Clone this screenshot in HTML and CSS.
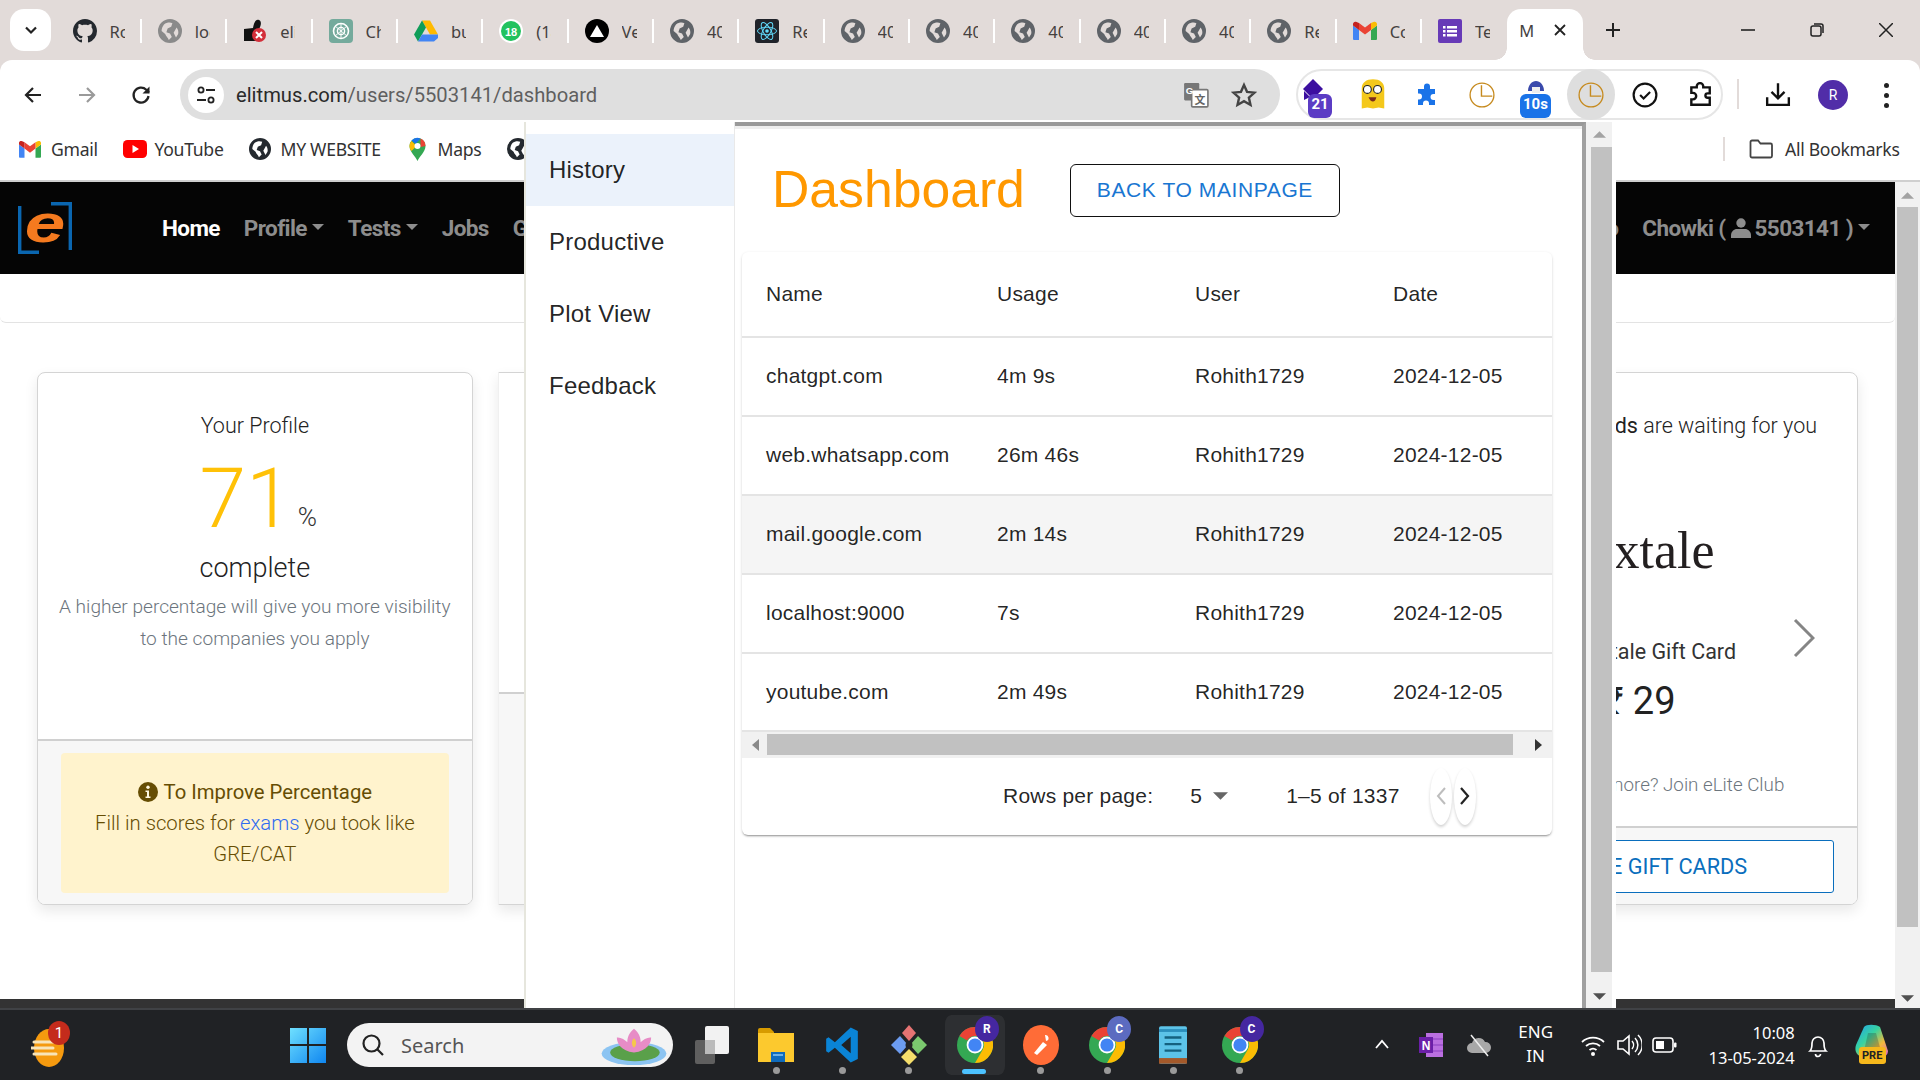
FILE: index.html
```html
<!DOCTYPE html>
<html lang="en">
<head>
<meta charset="utf-8">
<title>Dashboard</title>
<link rel="stylesheet" href="styles.css">
</head>
<body>
<svg class="defs" width="0" height="0">
  <defs>
    <symbol id="globe" viewBox="2 2 20 20"><path fill-rule="evenodd" d="M12 2a10 10 0 1 0 0 20 10 10 0 0 0 0-20zM7 6.500c2-1.500 5-2 7-1l-1 3-3 1.500-1 3 3 1 1.500 3-2.500 2.500c-.5-2-2.500-3-3-5L5 12c0-2 .800-4 2-5.500zM17.500 9c1.200 1.500 1.800 3.500 1.300 5.500L17 17.500l-2-4z"/></symbol>
    <symbol id="github" viewBox="0 0 16 16"><path d="M8 0C3.58 0 0 3.58 0 8c0 3.54 2.29 6.53 5.47 7.59.4.07.55-.17.55-.38 0-.19-.01-.82-.01-1.49-2.01.37-2.53-.49-2.69-.94-.09-.23-.48-.94-.82-1.13-.28-.15-.68-.52-.01-.53.63-.01 1.08.58 1.23.82.72 1.21 1.87.87 2.33.66.07-.52.28-.87.51-1.07-1.78-.2-3.64-.89-3.64-3.95 0-.87.31-1.59.82-2.15-.08-.2-.36-1.02.08-2.12 0 0 .67-.21 2.2.82.64-.18 1.32-.27 2-.27.68 0 1.36.09 2 .27 1.53-1.04 2.2-.82 2.2-.82.44 1.1.16 1.92.08 2.12.51.56.82 1.27.82 2.15 0 3.07-1.87 3.75-3.65 3.95.29.25.54.73.54 1.48 0 1.07-.01 1.93-.01 2.2 0 .21.15.46.55.38A8.013 8.013 0 0016 8c0-4.42-3.58-8-8-8z"/></symbol>
    <symbol id="gmail" viewBox="0 0 24 18"><path fill="#4285f4" d="M1 18h5V8L0 3.5V17a1 1 0 0 0 1 1z"/><path fill="#34a853" d="M18 18h5a1 1 0 0 0 1-1V3.5L18 8z"/><path fill="#fbbc04" d="M18 1v7l6-4.5V2c0-2-2.2-3-3.6-1.9z"/><path fill="#ea4335" d="M6 8V1l6 4.5L18 1v7l-6 4.5z"/><path fill="#c5221f" d="M0 2v1.5L6 8V1L3.6.1C2.2-1 0 0 0 2z"/></symbol>
    <symbol id="drive" viewBox="0 0 24 21"><path fill="#ffba00" d="M16 0l8 14h-8L8 0z"/><path fill="#0f9d58" d="M8 0l4 7-8 14-4-7z"/><path fill="#4285f4" d="M4 21l4-7h20l-8 7z"/></symbol>
    <symbol id="chrome" viewBox="0 0 24 24"><circle cx="12" cy="12" r="12" fill="#34a853"/><path fill="#ea4335" d="M12 0a12 12 0 0 1 10.4 6H12a6 6 0 0 0-5.2 3L1.6 6A12 12 0 0 1 12 0z"/><path fill="#fbbc04" d="M22.4 6A12 12 0 0 1 12 24l5.2-9a6 6 0 0 0 0-6z"/><circle cx="12" cy="12" r="5.6" fill="#fff"/><circle cx="12" cy="12" r="4.4" fill="#4285f4"/></symbol>
    <symbol id="clock" viewBox="0 0 24 24"><circle cx="12" cy="12" r="11" fill="none" stroke="#c68a1e" stroke-width="1.2"/><path d="M11.500 3v10h10" fill="none" stroke="#c68a1e" stroke-width="1.300"/></symbol>
    <symbol id="caret" viewBox="0 0 10 5"><path d="M0 0h10L5 5z"/></symbol>
  </defs>
</svg>

<header class="chrome">
  <div class="tabstrip">
    <div class="tabs-btn"><svg class="i14" viewBox="0 0 14 14"><path d="M2 4.5l5 5 5-5" fill="none" stroke="#222" stroke-width="2.2"/></svg></div>
    <div class="tab"><svg class="ti dark"><use href="#github"/></svg><span class="tt">Rohith</span></div>
    <div class="tab"><svg class="ti lightglobe"><use href="#globe"/></svg><span class="tt">localhost</span></div>
    <div class="tab"><svg class="ti" viewBox="0 0 24 24"><path d="M1 10l9-1c1-6 3-9 6-8 3 1 2 6 0 9v12H1z" fill="#111"/><circle cx="16" cy="16" r="7" fill="#d32f3a"/><path d="M13 13l6 6m0-6l-6 6" stroke="#fff" stroke-width="2"/></svg><span class="tt">eliTMUS</span></div>
    <div class="tab"><svg class="ti" viewBox="0 0 24 24"><rect width="24" height="24" rx="4" fill="#74aa9c"/><circle cx="12" cy="12" r="7.5" fill="none" stroke="#fff" stroke-width="1.6"/><circle cx="12" cy="12" r="3.6" fill="none" stroke="#fff" stroke-width="1.4"/><path d="M6 7l12 10M18 7L6 17M12 4v16" stroke="#fff" stroke-width=".9"/></svg><span class="tt">ChatGPT</span></div>
    <div class="tab"><svg class="ti"><use href="#drive"/></svg><span class="tt">build</span></div>
    <div class="tab"><svg class="ti" viewBox="0 0 24 24"><circle cx="12" cy="12" r="12" fill="#fff"/><circle cx="12" cy="12" r="10" fill="#22c25e"/><text x="12" y="16.5" class="wa">18</text></svg><span class="tt">(18) WhatsApp</span></div>
    <div class="tab"><svg class="ti" viewBox="0 0 24 24"><circle cx="12" cy="12" r="12" fill="#000"/><path d="M12 6l7 12H5z" fill="#fff"/></svg><span class="tt">Vercel</span></div>
    <div class="tab"><svg class="ti gglobe"><use href="#globe"/></svg><span class="tt">404</span></div>
    <div class="tab"><svg class="ti" viewBox="0 0 24 24"><rect width="24" height="24" rx="3" fill="#20232a"/><g fill="none" stroke="#61dafb" stroke-width="1"><ellipse cx="12" cy="12" rx="9.5" ry="3.8"/><ellipse cx="12" cy="12" rx="9.5" ry="3.8" transform="rotate(60 12 12)"/><ellipse cx="12" cy="12" rx="9.5" ry="3.8" transform="rotate(120 12 12)"/></g><circle cx="12" cy="12" r="1.8" fill="#61dafb"/></svg><span class="tt">React</span></div>
    <div class="tab"><svg class="ti gglobe"><use href="#globe"/></svg><span class="tt">404</span></div>
    <div class="tab"><svg class="ti gglobe"><use href="#globe"/></svg><span class="tt">404</span></div>
    <div class="tab"><svg class="ti gglobe"><use href="#globe"/></svg><span class="tt">404</span></div>
    <div class="tab"><svg class="ti gglobe"><use href="#globe"/></svg><span class="tt">404</span></div>
    <div class="tab"><svg class="ti gglobe"><use href="#globe"/></svg><span class="tt">404</span></div>
    <div class="tab"><svg class="ti gglobe"><use href="#globe"/></svg><span class="tt">React</span></div>
    <div class="tab"><svg class="ti tgm"><use href="#gmail"/></svg><span class="tt">Compose</span></div>
    <div class="tab noline"><svg class="ti" viewBox="0 0 24 24"><rect width="24" height="24" rx="2" fill="#673ab7"/><path d="M5 7h2.5v2.5H5zM9 7h10v2.5H9zM5 11h2.5v2.5H5zM9 11h10v2.5H9zM5 15h2.5v2.5H5zM9 15h10v2.5H9z" fill="#fff"/></svg><span class="tt">Test</span></div>
    <div class="tab-active"><span class="tt tt-a">MUI</span><svg class="i14 x" viewBox="0 0 14 14"><path d="M2 2l10 10M12 2L2 12" stroke="#222" stroke-width="1.8"/></svg></div>
    <div class="newtab"><svg class="i18" viewBox="0 0 18 18"><path d="M9 2v14M2 9h14" stroke="#222" stroke-width="2"/></svg></div>
    <div class="winctl">
      <svg class="i14" viewBox="0 0 14 14"><path d="M0 7h14" stroke="#222" stroke-width="1.6"/></svg>
      <svg class="i14" viewBox="0 0 14 14"><rect x="1" y="3" width="10" height="10" rx="2" fill="none" stroke="#222" stroke-width="1.5"/><path d="M4 1h7a2 2 0 0 1 2 2v7" fill="none" stroke="#222" stroke-width="1.5"/></svg>
      <svg class="i14" viewBox="0 0 14 14"><path d="M0 0l14 14M14 0L0 14" stroke="#222" stroke-width="1.5"/></svg>
    </div>
  </div>

  <div class="toolbar">
    <div class="navbtn"><svg class="i24" viewBox="0 0 24 24"><path d="M20 12H5m7-7l-7 7 7 7" fill="none" stroke="#222" stroke-width="2.2"/></svg></div>
    <div class="navbtn"><svg class="i24" viewBox="0 0 24 24"><path d="M4 12h15m-7-7l7 7-7 7" fill="none" stroke="#9a9a9a" stroke-width="2.2"/></svg></div>
    <div class="navbtn"><svg class="i24" viewBox="0 0 24 24"><path d="M19.5 13a7.5 7.5 0 1 1-2.2-6.3L20 9.5" fill="none" stroke="#222" stroke-width="2.2"/><path d="M20.5 3.5v7h-7z" fill="#222"/></svg></div>
    <div class="omnibox">
      <div class="siteinfo"><svg class="i22" viewBox="0 0 22 22"><circle cx="6" cy="6" r="2.6" fill="none" stroke="#222" stroke-width="1.8"/><path d="M11 6h9M2 16h9" stroke="#222" stroke-width="1.8"/><circle cx="16" cy="16" r="2.6" fill="none" stroke="#222" stroke-width="1.8"/></svg></div>
      <div class="url"><span class="url-host">elitmus.com</span>/users/5503141/dashboard</div>
      <svg class="translate" viewBox="0 0 24 24"><rect x="1" y="1" width="14" height="16" rx="1" fill="#777"/><rect x="8" y="7" width="15" height="16" rx="1" fill="#fff" stroke="#777" stroke-width="1.5"/><text x="6" y="11" class="tr-g">G</text><text x="15.5" y="20" class="tr-z">文</text></svg>
      <svg class="star" viewBox="0 0 24 24"><path d="M12 2.8l2.8 6.3 6.9.7-5.2 4.6 1.5 6.8-6-3.5-6 3.5 1.5-6.8-5.2-4.6 6.9-.7z" fill="none" stroke="#444" stroke-width="2.2"/></svg>
    </div>
    <div class="extpill">
      <div class="ext"><svg class="i40" viewBox="0 0 40 40"><path d="M15 4l10 10-10 10L5 14z" fill="#3c0fa0"/><path d="M6 16l6 6-6 3z" fill="#3c0fa0"/></svg><span class="ebadge purple">21</span></div>
      <div class="ext"><svg class="i36" viewBox="0 0 32 32"><path d="M6 10c0-5 4-8 10-8s10 3 10 8v18l-5-1-5 1-5-1-5 1z" fill="#f4c81c"/><circle cx="11" cy="11" r="3.500" fill="#fff" stroke="#222"/><circle cx="20" cy="11" r="3.500" fill="#fff" stroke="#222"/><path d="M12 18c2 5 6 5 7 0z" fill="#7a2b1c"/></svg></div>
      <div class="ext"><svg class="i24" viewBox="0 0 24 24"><path d="M9 3.5a3 3 0 0 1 6 0V6h5v5h-1.5a3 3 0 0 0 0 6H20v5h-6v-1.5a3 3 0 0 0-6 0V22H3v-5.5h1a3 3 0 0 0 0-6H3V6h6z" fill="#1a73e8"/></svg></div>
      <div class="ext"><svg class="i26"><use href="#clock"/></svg></div>
      <div class="ext"><svg class="i40" viewBox="0 0 40 40"><path d="M12 16c0-6 4-10 8-10s8 4 8 10z" fill="#3949ab"/><rect x="16" y="12" width="8" height="6" fill="#eee"/></svg><span class="ebadge blue">10s</span></div>
      <div class="ext ext-on"><svg class="i26"><use href="#clock"/></svg></div>
      <div class="ext"><svg class="i26" viewBox="0 0 24 24"><circle cx="12" cy="12" r="10.5" fill="none" stroke="#111" stroke-width="2"/><path d="M7.5 12l3.2 3.2 6-6" fill="none" stroke="#111" stroke-width="2"/></svg></div>
      <div class="ext"><svg class="i26" viewBox="0 0 24 24"><path d="M9 5V4a3 3 0 0 1 6 0v1h6v5.5h-2a2 2 0 0 0 0 4h2V21H4v-5h1.5a3 3 0 0 0 0-6H4V5z" fill="none" stroke="#111" stroke-width="2.2"/></svg></div>
    </div>
    <div class="tb-sep"></div>
    <div class="tb-dl"><svg class="i26" viewBox="0 0 24 24"><path d="M12 2v14m-6-6l6 6 6-6" fill="none" stroke="#111" stroke-width="2.2"/><path d="M2 15v7h20v-7" fill="none" stroke="#111" stroke-width="2.2"/></svg></div>
    <div class="avatar">R</div>
    <div class="dots"><i></i><i></i><i></i></div>
  </div>

  <div class="bookmarks">
    <div class="bm bm-gmail"><svg class="bmi-gm"><use href="#gmail"/></svg>Gmail</div>
    <div class="bm bm-yt"><svg class="bmi-yt" viewBox="0 0 24 18"><rect width="24" height="18" rx="4.5" fill="#f00"/><path d="M9.5 5l6.5 4-6.5 4z" fill="#fff"/></svg>YouTube</div>
    <div class="bm bm-web"><svg class="bmi dark"><use href="#globe"/></svg>MY WEBSITE</div>
    <div class="bm bm-maps"><svg class="bmi-map" viewBox="0 0 18 24"><path d="M9 24c-1.5-4-8-9-8-15a8 8 0 0 1 16 0c0 6-6.500 11-8 15z" fill="#34a853"/><path d="M3 3.500A8 8 0 0 1 12 1.500L7 7z" fill="#1a73e8"/><path d="M12 1.500a8 8 0 0 1 5 7.500l-5 1z" fill="#ea4335"/><path d="M1 9c0 2 1 4 2 5l5-5-5-5C2 5 1 7 1 9z" fill="#fbbc04"/><circle cx="9" cy="9" r="3" fill="#fff"/></svg>Maps</div>
    <div class="bm bm-more"><svg class="bmi dark"><use href="#globe"/></svg></div>
    <div class="bm-sep"></div>
    <div class="bm bm-all"><svg class="bmi-f" viewBox="0 0 24 20"><path d="M1.500 3a1.500 1.500 0 0 1 1.500-1.500h6l2.500 3h10A1.500 1.500 0 0 1 23 6v11a1.500 1.500 0 0 1-1.500 1.500H3A1.500 1.500 0 0 1 1.500 17z" fill="none" stroke="#444" stroke-width="1.8"/></svg>All Bookmarks</div>
  </div>
</header>

<div class="page">
  <main class="site">
    <nav class="sitenav">
      <svg class="logo" viewBox="0 0 54 52">
        <path d="M1.700 4v46.300H21" class="lg-l"/>
        <path d="M33 1.700h19.300V48" class="lg-r"/>
        <text x="20" y="40" class="lg-e" transform="scale(1.350 1)">e</text>
      </svg>
      <a class="nl nl-on">Home</a>
      <a class="nl">Profile<svg class="nc"><use href="#caret"/></svg></a>
      <a class="nl">Tests<svg class="nc"><use href="#caret"/></svg></a>
      <a class="nl">Jobs</a>
      <a class="nl">Gift Cards</a>
      <a class="nl nl-info">Coupon Info</a>
      <a class="nl nl-user">Chowki (<svg class="user" viewBox="0 0 20 20"><circle cx="10" cy="5" r="4.700"/><path d="M0 20v-2.500C0 13.500 3 11 6 11h8c3 0 6 2.500 6 6.500V20z"/></svg> 5503141 )<svg class="nc"><use href="#caret"/></svg></a>
    </nav>
    <div class="subbar"></div>
    <section class="cards">
      <article class="card">
        <div class="card-body">
          <p class="cp-title">Your Profile</p>
          <p class="cp-num"><span class="num71">71</span><span class="pct">%</span></p>
          <p class="cp-complete">complete</p>
          <p class="cp-note">A higher percentage will give you more visibility to the companies you apply</p>
        </div>
        <div class="card-foot foot-yellow">
          <div class="alert">
            <div class="alert-h"><svg class="info" viewBox="0 0 20 20"><circle cx="10" cy="10" r="10" fill="#664d03"/><circle cx="10" cy="5.200" r="1.700" fill="#fff8e0"/><path d="M7.500 8.500h3.500v6h1.500v1.500h-5v-1.500H9V10H7.500z" fill="#fff8e0"/></svg> To Improve Percentage</div>
            <div class="alert-t">Fill in scores for <a class="exams">exams</a> you took like GRE/CAT</div>
          </div>
        </div>
      </article>
      <article class="card card-plain"><div class="card-body"></div><div class="card-foot foot-2"></div></article>
      <article class="card card-plain"><div class="card-body"></div><div class="card-foot foot-3"></div></article>
      <article class="card card-gift">
        <div class="card-body">
          <p class="g-title"><b>Gift Cards</b> are waiting for you</p>
          <p class="g-logo">Nextale</p>
          <p class="g-name">Nextale Gift Card</p>
          <p class="g-price">₹ 29</p>
          <p class="g-more">Want to win more? Join eLite Club</p>
          <svg class="g-next" viewBox="0 0 22 40"><path d="M2 2l18 18L2 38" fill="none" stroke="#858585" stroke-width="3"/></svg>
        </div>
        <div class="card-foot foot-gift"><div class="gift-btn">SEE THE GIFT CARDS</div></div>
      </article>
    </section>
    <div class="sitefoot"></div>
  </main>
  <div class="vbar vbar-page">
    <div class="va va-up"><svg class="ca up"><use href="#caret"/></svg></div>
    <div class="vthumb"></div>
    <div class="va va-down"><svg class="ca"><use href="#caret"/></svg></div>
  </div>
</div>

<aside class="popup">
  <div class="side">
    <div class="side-i side-on">History</div>
    <div class="side-i">Productive</div>
    <div class="side-i">Plot View</div>
    <div class="side-i">Feedback</div>
  </div>
  <div class="pop-main">
    <div class="pop-head">
      <h1 class="dash">Dashboard</h1>
      <div class="back">BACK TO MAINPAGE</div>
    </div>
    <div class="tcard">
      <table class="tbl">
        <thead><tr><th class="c1">Name</th><th class="c2">Usage</th><th class="c3">User</th><th class="c4">Date</th></tr></thead>
        <tbody>
          <tr><td>chatgpt.com</td><td>4m 9s</td><td>Rohith1729</td><td>2024-12-05</td></tr>
          <tr><td>web.whatsapp.com</td><td>26m 46s</td><td>Rohith1729</td><td>2024-12-05</td></tr>
          <tr class="hov"><td>mail.google.com</td><td>2m 14s</td><td>Rohith1729</td><td>2024-12-05</td></tr>
          <tr><td>localhost:9000</td><td>7s</td><td>Rohith1729</td><td>2024-12-05</td></tr>
          <tr><td>youtube.com</td><td>2m 49s</td><td>Rohith1729</td><td>2024-12-05</td></tr>
        </tbody>
      </table>
      <div class="hbar">
        <svg class="ha" viewBox="0 0 8 12"><path d="M8 0v12L1 6z" fill="#8a8a8a"/></svg>
        <div class="hthumb"></div>
        <svg class="ha ha-r" viewBox="0 0 8 12"><path d="M0 0v12l7-6z" fill="#333"/></svg>
      </div>
      <div class="pager">
        <span class="rpp">Rows per page:</span>
        <span class="rv">5</span>
        <svg class="rc"><use href="#caret"/></svg>
        <span class="range">1–5 of 1337</span>
        <span class="pg pg-prev"><svg class="pgi" viewBox="0 0 12 20"><path d="M10 2L3 10l7 8" fill="none" stroke="#bdbdbd" stroke-width="2"/></svg></span>
        <span class="pg"><svg class="pgi" viewBox="0 0 12 20"><path d="M2 2l7 8-7 8" fill="none" stroke="#222" stroke-width="2.200"/></svg></span>
      </div>
    </div>
  </div>
  <div class="vbar vbar-pop">
    <div class="va va-up2"><svg class="ca up"><use href="#caret"/></svg></div>
    <div class="vthumb"></div>
    <div class="va va-down2"><svg class="ca"><use href="#caret"/></svg></div>
  </div>
</aside>

<footer class="taskbar">
  <div class="tb-left">
    <div class="weather"><svg class="wx" viewBox="0 0 34 40"><ellipse cx="18" cy="20" rx="15" ry="19" fill="#f59a0f"/><path d="M3 14h22M0 20h22M3 26h22" stroke="#f8e4b8" stroke-width="3" stroke-linecap="round"/></svg><span class="wbadge">1</span></div>
  </div>
  <div class="winbtn"><svg class="win" viewBox="0 0 36 36"><defs><linearGradient id="wg" x1="0" y1="0" x2="1" y2="1"><stop offset="0" stop-color="#6fe0ff"/><stop offset="1" stop-color="#0f86f0"/></linearGradient></defs><path fill="url(#wg)" d="M0 1h17v16H0zM19 1h17v16H19zM0 19h17v17H0zM19 19h17v17H19z"/></svg></div>
  <div class="search">
    <svg class="i24 mag" viewBox="0 0 24 24"><circle cx="10.500" cy="10.500" r="8" fill="none" stroke="#222" stroke-width="2.200"/><path d="M16 16l6 6" stroke="#222" stroke-width="2.200"/></svg>
    <span class="s-t">Search</span>
    <svg class="lotus" viewBox="0 0 70 42"><ellipse cx="35" cy="30" rx="34" ry="12" fill="#8cc4f2"/><ellipse cx="36" cy="29" rx="26" ry="9" fill="#5aa04a"/><path d="M35 4c6 5 7 10 7 14 4-4 8-5 11-5 0 6-4 14-18 16-14-2-18-10-18-16 3 0 7 1 11 5 0-4 1-9 7-14z" fill="#e78cc6"/><path d="M35 14c3 3 3 7 0 10-3-3-3-7 0-10z" fill="#f5c84a"/></svg>
  </div>
  <div class="apps">
    <div class="app"><svg class="tv" viewBox="0 0 36 40"><rect x="1" y="15" width="20" height="24" rx="2" fill="#5f5f5f"/><rect x="11" y="1" width="24" height="28" rx="2" fill="#f2f2f2"/><rect x="11" y="15" width="10" height="14" fill="#bbb"/></svg></div>
    <div class="app app-dot"><svg class="fo" viewBox="0 0 36 38"><path d="M0 4a2 2 0 0 1 2-2h10l4 4v6H0z" fill="#d79b00"/><path d="M0 7h36v29H0z" fill="#fcc92e"/><path d="M13 26h14v10H13z" fill="#0f6cbd"/><path d="M15 29h10" stroke="#8cc8f5" stroke-width="1.500"/></svg></div>
    <div class="app app-dot"><svg class="vs" viewBox="0 0 24 24"><path fill-rule="evenodd" fill="#0a84d6" d="M17.500 1L22 3.200v17.600L17.500 23 7.500 13.800l-4 3.100L2 16V8l1.500-.9 4 3.100zM17.500 6.800L11.500 12l6 5.200z"/></svg></div>
    <div class="app app-dot"><svg class="gk" viewBox="0 0 36 40"><path d="M18 0l7 8-7 8-7-8z" fill="#e57373"/><path d="M9 11l8 9-8 9-9-9z" fill="#6c9cf0"/><path d="M27 11l9 9-9 9-8-9z" fill="#7bc96f"/><path d="M18 24l8 8-8 8-8-8z" fill="#f5de6b"/><circle cx="18" cy="20" r="3.500" fill="#222"/></svg></div>
    <div class="app app-active"><svg class="ch"><use href="#chrome"/></svg><span class="cb cb-r">R</span></div>
    <div class="app app-dot"><svg class="pm" viewBox="0 0 36 40"><ellipse cx="18" cy="20" rx="18" ry="20" fill="#ff6c37"/><path d="M11 28l9-11 4 3-10 10zM22 10a3 3 0 1 1 1 6z" fill="#fff"/></svg></div>
    <div class="app app-dot"><svg class="ch"><use href="#chrome"/></svg><span class="cb cb-c">C</span></div>
    <div class="app app-dot"><svg class="np" viewBox="0 0 30 40"><rect width="30" height="40" rx="2" fill="#5cc3e8"/><rect y="34" width="30" height="6" fill="#a4592a"/><rect y="3" width="30" height="3" fill="#2b8fbc"/><path d="M6 12h18M6 19h18M6 26h18" stroke="#14617f" stroke-width="2.500"/></svg></div>
    <div class="app app-dot"><svg class="ch"><use href="#chrome"/></svg><span class="cb cb-d">C</span></div>
  </div>
  <div class="tray">
    <div class="t t-chev"><svg class="i18" viewBox="0 0 18 18"><path d="M3 12l6-7 6 7" fill="none" stroke="#fff" stroke-width="1.800"/></svg></div>
    <div class="t t-one"><svg class="i26" viewBox="0 0 26 26"><rect x="8" y="1" width="17" height="24" fill="#ba6fe0"/><path d="M14 7h11M14 13h11M14 19h11" stroke="#8a3fc0"/><rect x="1" y="5" width="14" height="16" fill="#6b1fa8"/><text x="8" y="17.500" class="one-n">N</text></svg></div>
    <div class="t t-cloud"><svg class="i26" viewBox="0 0 26 26"><path d="M6 21a5 5 0 0 1 0-10 7 7 0 0 1 13-1 5.500 5.500 0 0 1 1 11z" fill="#a8a8a8"/><path d="M5 3l17 21" stroke="#eee" stroke-width="1.500"/></svg></div>
    <div class="t t-eng"><span>ENG</span><span>IN</span></div>
    <div class="t t-wifi"><svg class="i26" viewBox="0 0 26 26"><g fill="none" stroke="#fff" stroke-width="1.800"><path d="M2 10a16 16 0 0 1 22 0"/><path d="M6 14a10.500 10.500 0 0 1 14 0"/><path d="M9.500 18a5.500 5.500 0 0 1 7 0"/></g><circle cx="13" cy="22" r="2" fill="#fff"/></svg></div>
    <div class="t t-vol"><svg class="i26" viewBox="0 0 26 26"><path d="M2 9h5l6-5v18l-6-5H2z" fill="none" stroke="#fff" stroke-width="1.600"/><path d="M16 9a6 6 0 0 1 0 8M19 6a10 10 0 0 1 0 14M22 3a14 14 0 0 1 0 20" fill="none" stroke="#fff" stroke-width="1.500"/></svg></div>
    <div class="t t-bat"><svg class="i26" viewBox="0 0 26 26"><rect x="1" y="6" width="20" height="14" rx="3" fill="none" stroke="#fff" stroke-width="1.600"/><rect x="4" y="9" width="8" height="8" fill="#fff"/><rect x="22" y="10.500" width="2.500" height="5" rx="1" fill="#fff"/></svg></div>
    <div class="t t-clock"><span>10:08</span><span>13-05-2024</span></div>
    <div class="t t-bell"><svg class="i26" viewBox="0 0 26 26"><path d="M5 19c2-2 2-4 2-8a6 6 0 0 1 12 0c0 4 0 6 2 8z" fill="none" stroke="#fff" stroke-width="1.700"/><path d="M10.500 22a2.500 2.500 0 0 0 5 0" fill="none" stroke="#fff" stroke-width="1.700"/></svg></div>
    <div class="t t-cop"><svg class="cop" viewBox="0 0 36 36"><defs><linearGradient id="cg" x1="0" y1="0" x2="1" y2="1"><stop offset="0" stop-color="#1fa0f0"/><stop offset=".4" stop-color="#38d39f"/><stop offset=".7" stop-color="#f5b93a"/><stop offset="1" stop-color="#d65ce0"/></linearGradient></defs><path d="M10 4c2-3 12-3 16 0l8 24c0 3-2 6-8 6H10C3 34 0 28 2 22z" fill="url(#cg)"/><path d="M14 10h8l5 18H10z" fill="#202225" opacity=".25"/></svg><span class="pre">PRE</span></div>
  </div>
</footer>
</body>
</html>
```
FILE: styles.css
```css
* { box-sizing: border-box; }
html, body { margin: 0; padding: 0; }
body { width: 1920px; height: 1080px; overflow: hidden; position: relative; display: flex; flex-direction: column; background: #e2dbd9; font-family: "Roboto", "Liberation Sans", sans-serif; }
p { margin: 0; }
svg { display: block; flex: none; }
.defs { position: absolute; }
.i14 { width: 14px; height: 14px; }
.i18 { width: 18px; height: 18px; }
.i22 { width: 22px; height: 22px; }
.i24 { width: 24px; height: 24px; }
.i26 { width: 26px; height: 26px; }
.i36 { width: 36px; height: 36px; }
.i40 { width: 40px; height: 40px; }

/* browser chrome */
.chrome { height: 182px; flex: none; display: flex; flex-direction: column; }
.tabstrip { height: 60px; display: flex; align-items: flex-start; padding-left: 10px; }
.tabs-btn { width: 41px; height: 42px; margin-top: 9px; margin-right: 5.500px; background: #fff; border-radius: 14px; display: flex; align-items: center; justify-content: center; }
.tab { width: 85.350px; height: 24px; margin-top: 19px; display: flex; align-items: center; padding-left: 16px; border-right: 2px solid #fff; }
.tab.noline { border-right: 0; }
.ti { width: 24px; height: 24px; }
.tgm { height: 20px; }
.dark { fill: #24292f; }
.lightglobe { fill: #8a8a8a; }
.gglobe { fill: #5f6368; }
.tt { display: block; margin-left: 13px; width: 15px; overflow: hidden; white-space: nowrap; font: 400 16.500px "Noto Sans", sans-serif; color: #45413f; }
.wa { font: 700 11px "Liberation Sans", sans-serif; fill: #fff; text-anchor: middle; }
.tab-active { width: 76px; height: 51px; margin-top: 9px; background: #fff; border-radius: 14px 14px 0 0; display: flex; align-items: center; padding: 0 0 9px 12px; position: relative; }
.tab-active::before, .tab-active::after { content: ""; position: absolute; bottom: 0; width: 12px; height: 12px; }
.tab-active::before { left: -12px; background: radial-gradient(circle at 0 0, transparent 11.500px, #fff 12px); }
.tab-active::after { right: -12px; background: radial-gradient(circle at 100% 0, transparent 11.500px, #fff 12px); }
.tt-a { margin-left: 0; width: 15px; }
.x { margin-left: 19px; }
.newtab { width: 60px; height: 42px; margin-top: 9px; display: flex; align-items: center; justify-content: center; }
.winctl { margin-left: auto; display: flex; align-items: center; height: 42px; margin-top: 9px; gap: 55px; padding-right: 27px; }

.toolbar { height: 60px; background: #fff; border-radius: 12px 12px 0 0; display: flex; align-items: flex-start; padding: 9px 0 0 6px; }
.navbtn { width: 54px; height: 51px; display: flex; align-items: center; justify-content: center; }
.omnibox { width: 1100px; height: 51px; margin-left: 12px; background: #dfdfdf; border-radius: 26px; display: flex; align-items: center; padding-left: 8px; }
.siteinfo { width: 36px; height: 36px; background: #fff; border-radius: 50%; display: flex; align-items: center; justify-content: center; }
.url { margin-left: 12px; font: 400 20.200px "Roboto", sans-serif; color: #5f5f5f; white-space: nowrap; }
.url-host { color: #2a2a2a; }
.translate { width: 26px; height: 26px; margin-left: auto; }
.tr-g { font: 700 9px "Liberation Sans", sans-serif; fill: #fff; text-anchor: middle; }
.tr-z { font: 700 10px "Noto Sans CJK SC", sans-serif; fill: #666; text-anchor: middle; }
.star { width: 26px; height: 26px; margin-left: 22px; margin-right: 23px; }
.extpill { width: 427px; height: 51px; margin-left: 16px; border: 2px solid #e6e6e6; border-radius: 26px; display: flex; align-items: center; }
.ext { width: 54.500px; height: 47px; flex: none; display: flex; align-items: center; justify-content: center; position: relative; }
.ext:first-child { margin-left: -7px; }
.ext-on::before { content: ""; position: absolute; left: 3px; top: -2px; width: 48px; height: 51px; border-radius: 50%; background: #dedede; }
.ext-on svg { position: relative; }
.ebadge { position: absolute; left: 17px; bottom: 0; min-width: 24px; padding: 1px 3px; border-radius: 6px; color: #fff; font: 700 15px "Roboto", sans-serif; text-align: center; }
.purple { background: #5b3cc4; height: 24px; }
.blue { background: #1a73e8; left: 11px; height: 24px; }
.tb-sep { width: 2px; height: 30px; margin: 10px 0 0 14px; background: #e2dbd9; }
.tb-dl { width: 28px; margin: 12px 0 0 26px; }
.avatar { width: 30px; height: 30px; margin: 11px 0 0 25px; background: #512da8; color: #fff; border-radius: 50%; font: 400 14px "Roboto", sans-serif; display: flex; align-items: center; justify-content: center; }
.dots { margin: 14px 0 0 36px; display: flex; flex-direction: column; gap: 5px; }
.dots i { display: block; width: 5px; height: 5px; border-radius: 50%; background: #222; }

.bookmarks { height: 62px; background: #fff; border-bottom: 2px solid #cfcfcf; display: flex; align-items: center; padding-bottom: 2px; position: relative; }
.bm { display: flex; align-items: center; font: 400 17.600px "Noto Sans", sans-serif; letter-spacing: -.3px; color: #333; white-space: nowrap; }
.bm-gmail { margin-left: 19px; width: 103.500px; }
.bmi-gm { width: 22px; height: 17px; margin-right: 10px; }
.bm-yt { width: 126px; }
.bmi-yt { width: 24px; height: 18px; margin-right: 8px; }
.bm-web { width: 161px; }
.bmi { width: 22px; height: 22px; margin-right: 10px; }
.bm-maps { width: 97px; }
.bmi-map { width: 19px; height: 24px; margin-right: 11px; margin-left: -2px; }
.bm-more { width: 40px; }
.bm-sep { width: 2px; height: 24px; background: #e2dbd9; margin-left: 1176.500px; }
.bm-all { margin-left: 24px; }
.bmi-f { width: 24px; height: 20px; margin-right: 12px; }

/* the site under the popup */
.page { height: 826px; flex: none; display: flex; background: #fff; }
.site { width: 1895px; display: flex; flex-direction: column; }
.sitenav { height: 92px; background: #050505; display: flex; align-items: center; padding-left: 18px; padding-right: 25px; }
.logo { width: 54px; height: 52px; margin-right: 90px; }
.lg-l, .lg-r { fill: none; stroke: #0a66b0; stroke-width: 3.400px; }
.lg-e { font: italic 700 54px "Liberation Sans", sans-serif; fill: #f47a1f; text-anchor: middle; }
.nl { display: flex; align-items: center; font: 700 22.500px "Roboto", sans-serif; letter-spacing: -.6px; color: #8d8d8d; margin-right: 24px; white-space: nowrap; }
.nl-on { color: #fff; }
.nl-info { margin-left: auto; }
.nl-user { margin-right: 0; }
.nc { width: 12px; height: 6px; margin-left: 5px; margin-top: -2px; fill: #8d8d8d; }
.user { width: 20px; height: 20px; margin: 0 4px 0 5px; fill: #8d8d8d; }
.subbar { height: 49px; border-bottom: 1px solid #e3e3e3; border-radius: 0 0 6px 6px; }
.cards { flex: 1; display: grid; grid-template-columns: repeat(4, 1fr); column-gap: 25px; padding: 49px 37px 94px 36.500px; }
.card { display: flex; flex-direction: column; background: #fff; border: 1px solid #d4d4d4; border-radius: 8px; box-shadow: 0 6px 14px rgba(0,0,0,.09); position: relative; overflow: hidden; }
.card-plain { border-left-color: #f0f0f0; border-radius: 0 8px 8px 0; }
.card-body { flex: 1; position: relative; text-align: center; }
.card-foot { background: #f7f7f7; border-top: 2px solid #d0d0d0; flex: none; }
.cp-title { margin-top: 38px; font: 300 21.500px/30px "Roboto", sans-serif; color: #222; }
.cp-num { display: flex; align-items: flex-end; margin: 19.500px 0 0 162px; height: 76px; }
.num71 { font: 300 84px/76px "Roboto", sans-serif; color: #ffc107; }
.pct { font: 300 26px/26px "Roboto", sans-serif; color: #333; margin-left: 5px; margin-bottom: 7px; }
.cp-complete { margin-top: 14px; font: 300 27px/34px "Roboto", sans-serif; color: #222; }
.cp-note { margin: 6px auto 0; width: 396px; font: 300 19.100px/32px "Roboto", sans-serif; color: #6c757d; }
.foot-yellow { height: 165px; padding: 12px 23px; }
.alert { height: 140px; background: #fff3cd; border-radius: 4px; text-align: center; padding-top: 24px; color: #664d03; }
.alert-h { font: 400 20.300px/30px "Roboto", sans-serif; display: flex; align-items: center; justify-content: center; gap: 6px; }
.info { width: 20px; height: 20px; }
.alert-t { font: 300 20.300px/30.500px "Roboto", sans-serif; padding: 1px 20px 0; }
.exams { color: #2f6bf0; }
.foot-2 { height: 212px; }
.foot-3 { height: 165px; }
.foot-gift { height: 78px; padding: 12px 23px 10px 24px; }
.gift-btn { height: 53px; padding-left: 6px; background: #fff; border: 1.500px solid #0a6ebd; border-radius: 3px; color: #0a6ebd; font: 400 21.700px/51px "Roboto", sans-serif; text-align: center; }
.g-title { margin-top: 38px; padding-right: 40px; text-align: right; font: 300 21.500px/30px "Roboto", sans-serif; color: #222; white-space: nowrap; }
.g-title b { font-weight: 400; }
.g-logo { margin-top: 80px; padding-right: 12px; font: 400 52px/60px "Liberation Serif", serif; color: #231f20; }
.g-name { margin-top: 56px; padding-left: 30px; font: 400 21.500px/30px "Roboto", sans-serif; color: #333; }
.g-price { margin-top: 11px; font: 400 38px/46px "Roboto", sans-serif; color: #222; }
.g-more { margin-top: 48px; padding-left: 10px; font: 300 18.800px/26px "Roboto", sans-serif; color: #6c757d; white-space: nowrap; }
.g-next { position: absolute; left: 371px; top: 245px; width: 22px; height: 40px; }
.sitefoot { height: 9px; background: #333; flex: none; }

/* scrollbars */
.vbar { display: flex; flex-direction: column; flex: none; background: #f1f1f1; }
.vbar-page { width: 25px; padding: 0 2px; }
.vbar-pop { width: 26px; padding-left: 5px; }
.va { display: flex; align-items: center; justify-content: center; flex: none; }
.va-up { height: 25px; padding-top: 2px; }
.va-down { flex: 1; align-items: flex-end; padding-bottom: 6px; }
.va-up2 { height: 25px; margin-left: -5px; }
.va-down2 { flex: 1; align-items: flex-end; padding-bottom: 8px; margin-left: -5px; }
.vbar-page .vthumb { height: 720px; background: #c1c1c1; flex: none; }
.vbar-pop .vthumb { height: 825px; background: #c1c1c1; flex: none; }
.ca { width: 13px; height: 7px; fill: #505050; }
.ca.up { transform: rotate(180deg); fill: #a3a3a3; }

/* popup */
.popup { position: absolute; left: 524px; top: 122px; width: 1092px; height: 886px; display: flex; background: #fff; border-right: 4px solid #fff; box-shadow: inset 2px 0 0 #e6e6dd; z-index: 5; font-family: "Liberation Sans", sans-serif; }
.side { width: 211px; flex: none; padding-top: 12px; padding-left: 2px; border-right: 1px solid #e9e9e9; }
.side-i { height: 72px; padding-left: 23px; font-size: 24px; letter-spacing: .225px; line-height: 72px; color: rgba(0,0,0,.87); }
.side-on { background: #ebf2fb; }
.pop-main { flex: 1; border-top: 4px solid #999; border-right: 4px solid #a0a0a0; background: #fff; min-width: 0; }
.pop-head { display: flex; align-items: center; padding: 34.500px 0 35px 37px; border-top: 3px solid #eee; gap: 45px; }
.dash { margin: 0 0 2px; font-size: 51.700px; font-weight: 400; line-height: 51px; color: #ff9800; }
.back { width: 270px; height: 53px; border: 1.500px solid #111; border-radius: 6px; color: #1976d2; font-size: 21px; letter-spacing: .6px; line-height: 50px; text-align: center; }
.tcard { width: 810px; margin-left: 7px; background: #fff; border-radius: 6px; box-shadow: 0 2px 2px -1px rgba(0,0,0,.35), 0 1px 3px rgba(0,0,0,.14); overflow: hidden; }
.tbl { width: 810px; table-layout: fixed; border-collapse: collapse; font-size: 21px; letter-spacing: .225px; color: rgba(0,0,0,.87); }
.tbl th, .tbl td { padding: 0 0 0 24px; text-align: left; font-weight: 400; border-bottom: 2px solid #e4e4e4; white-space: nowrap; }
.tbl th { height: 85px; }
.tbl td { height: 79px; }
.tbl tbody tr:last-child td { height: 78px; }
.c1 { width: 231px; }
.c2 { width: 198px; }
.c3 { width: 198px; }
.c4 { width: 183px; }
.hov td { background: #f5f5f5; }
.hbar { height: 26px; background: #f1f1f1; display: flex; align-items: center; padding: 0 9px; }
.ha { width: 8px; height: 12px; }
.ha-r { margin-left: auto; }
.hthumb { width: 746px; height: 21px; margin-left: 8px; background: #c1c1c1; }
.pager { height: 77px; display: flex; align-items: center; padding-left: 261px; font-size: 21px; letter-spacing: .225px; color: rgba(0,0,0,.87); }
.rv { margin-left: 37px; }
.rc { width: 15px; height: 8px; margin-left: 11px; fill: #666; }
.range { margin-left: 58px; }
.pg { width: 22px; height: 57px; border-radius: 50%; background: #fff; box-shadow: 0 2px 3px rgba(0,0,0,.18); margin-left: 2px; display: flex; align-items: center; justify-content: center; }
.pg-prev { margin-left: 30px; }
.pgi { width: 12px; height: 20px; }

/* windows taskbar */
.taskbar { height: 72px; flex: none; background: #202225; border-top: 2px solid #404245; display: flex; align-items: center; color: #fff; position: relative; }
.tb-left { width: 274px; padding-left: 26px; }
.weather { width: 44px; height: 44px; position: relative; display: flex; align-items: center; justify-content: center; }
.wx { width: 34px; height: 40px; margin-top: 6px; }
.wbadge { position: absolute; left: 22px; top: -2px; width: 22px; height: 24px; border-radius: 50%; background: #c42b1c; font: 400 15px/24px "Roboto", sans-serif; text-align: center; }
.winbtn { width: 67px; display: flex; justify-content: center; }
.win { width: 36px; height: 36px; }
.search { width: 326px; height: 44px; margin-left: 6px; background: #f3f3f3; border-radius: 22px; display: flex; align-items: center; padding-left: 14px; color: #555; }
.mag { margin-right: 16px; }
.s-t { font: 400 20px "Noto Sans", sans-serif; }
.lotus { width: 68px; height: 40px; margin-left: auto; margin-right: 5px; }
.apps { display: flex; margin-left: 4px; }
.app { width: 66.200px; height: 60px; flex: none; display: flex; align-items: center; justify-content: center; position: relative; }
.app-dot::after { content: ""; position: absolute; left: 29.500px; bottom: 1px; width: 7px; height: 7px; border-radius: 50%; background: #9a9a9a; }
.app-active { background: #2d2f32; background-clip: padding-box; border-left: 3px solid transparent; border-right: 3px solid transparent; border-radius: 9px; }
.app-active::after { content: ""; position: absolute; left: 17px; bottom: 1px; width: 24px; height: 5px; border-radius: 3px; background: #4cc2ff; }
.tv { width: 36px; height: 40px; margin-left: 3px; }
.fo { width: 36px; height: 38px; }
.vs { width: 38px; height: 38px; }
.gk { width: 36px; height: 40px; }
.ch { width: 36px; height: 36px; }
.pm { width: 36px; height: 40px; }
.np { width: 28px; height: 38px; }
.cb { position: absolute; left: 33px; top: 1px; width: 24px; height: 26px; border-radius: 50%; font: 700 12px/26px "Roboto", sans-serif; text-align: center; }
.cb-r { background: #4527a0; left: 30px; }
.cb-c { background: #5c6bc0; }
.cb-d { background: #4527a0; }
.tray { display: flex; align-items: center; margin-left: 86px; }
.t { display: flex; align-items: center; justify-content: center; flex: none; }
.t-chev { width: 46px; }
.t-one { width: 52px; }
.t-cloud { width: 44px; }
.t-eng { width: 70px; flex-direction: column; margin-top: -2px; font: 400 17px/24px "Noto Sans", sans-serif; }
.t-wifi { width: 44px; }
.t-vol { width: 28px; }
.t-bat { width: 44px; }
.t-clock { width: 108px; flex-direction: column; align-items: flex-end; font: 400 16.500px/25px "Noto Sans", sans-serif; }
.t-bell { width: 46px; }
.t-cop { width: 62px; position: relative; }
.cop { width: 36px; height: 36px; margin-bottom: 8px; }
.pre { position: absolute; left: 18px; top: 24px; width: 27px; height: 17px; background: #f6b81c; color: #202225; border-radius: 3px; font: 700 11px/17px "Roboto", sans-serif; text-align: center; }
.one-n { font: 700 12px "Liberation Sans", sans-serif; fill: #fff; text-anchor: middle; }
```
